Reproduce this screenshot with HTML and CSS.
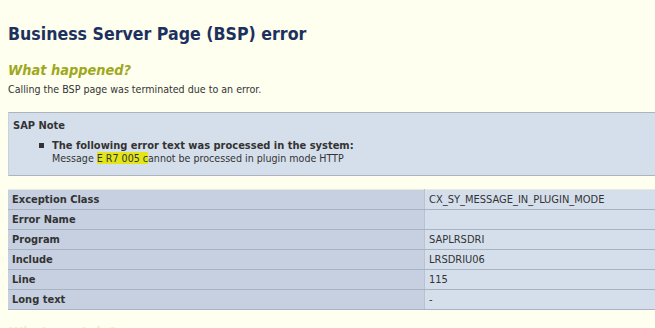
FILE: index.html
```html
<!DOCTYPE html>
<html lang="en">

<head>
  <meta charset="UTF-8" />
  <title>BSP error</title>
  <meta name="viewport" content="width=device-width, initial-scale=1.0" />
  <link rel="stylesheet" href="styles.css">
</head>

<body>
  <h1 class="page-title">Business Server Page (BSP) error</h1>

  <h2 class="section-title">What happened?</h2>
  <p class="lead">Calling the BSP page was terminated due to an error.</p>

  <div class="note">
    <div class="note-title">SAP Note</div>
    <ul class="note-list">
      <li>
        <strong>The following error text was processed in the system:</strong><br>
        Message <mark>E R7 005 c</mark>annot be processed in plugin mode HTTP
      </li>
    </ul>
  </div>

  <table class="details">
    <tr><th>Exception Class</th><td>CX_SY_MESSAGE_IN_PLUGIN_MODE</td></tr>
    <tr><th>Error Name</th><td></td></tr>
    <tr><th>Program</th><td>SAPLRSDRI</td></tr>
    <tr><th>Include</th><td>LRSDRIU06</td></tr>
    <tr><th>Line</th><td>115</td></tr>
    <tr><th>Long text</th><td>-</td></tr>
  </table>

  <h2 class="section-title faded">What can I do?</h2>
</body>

</html>
```

FILE: styles.css
```css
body {
  background: #fffff0;
  font-family: 'DejaVu Sans', sans-serif;
  font-stretch: condensed;
  font-size: 11px;
  color: #333;
  margin: 0;
  padding: 0 0 0 8px;
  width: 720px;
  overflow: hidden;
}

.page-title {
  margin: 0;
  padding-top: 23px;
  font-size: 17.6px;
  line-height: 22px;
  color: #1d315f;
}

.section-title {
  margin: 16px 0 0;
  font-size: 14.4px;
  line-height: 18px;
  font-style: italic;
  color: #9ea81d;
}

.lead {
  margin: 4px 0 0;
  font-size: 10.6px;
  line-height: 13px;
}

.note {
  margin-top: 16px;
  background: #d5dfec;
  border-top: 1px solid #aeb4bb;
  border-bottom: 1px solid #aeb4bb;
  border-left: 1px solid #c9d1dc;
  padding: 6px 4px 11px;
}

.note-title {
  font-weight: bold;
  line-height: 14px;
}

.note-list {
  margin: 6px 0 0;
  padding-left: 39px;
  list-style: none;
  font-size: 10.6px;
  line-height: 12px;
}

.note-list li {
  position: relative;
}

.note-list li::before {
  content: "";
  position: absolute;
  left: -13px;
  top: 4px;
  width: 5px;
  height: 5px;
  background: #333;
}

.note-list strong {
  font-size: 11px;
}

.note-list mark {
  background: #e2e619;
  color: #333;
}

.details {
  margin-top: 13px;
  width: 712px;
  border-collapse: collapse;
  border-top: 1px solid #e8e9e0;
}

.details th,
.details td {
  height: 19px;
  padding: 0 4px;
  text-align: left;
  border-bottom: 1px solid #a8b4c4;
}

.details th {
  width: 408px;
  background: #c6d0e0;
  border-right: 1px solid #b8c2d2;
}

.details td {
  background: #d5dfec;
  font-weight: normal;
}

.faded {
  margin-top: 13px;
  color: #f3efc4;
}
```
